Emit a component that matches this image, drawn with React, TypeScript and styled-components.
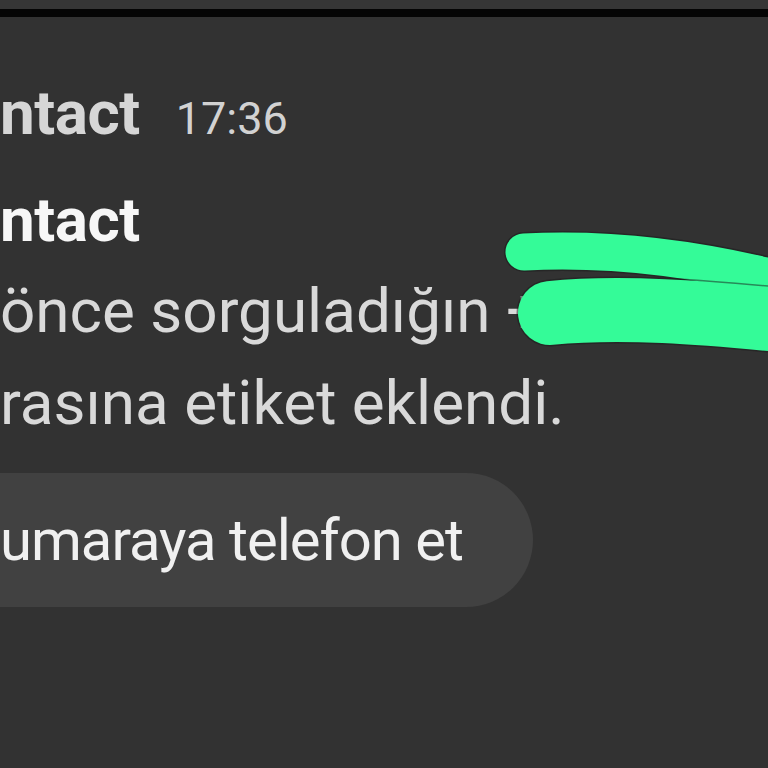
import React from "react";
import styled, { createGlobalStyle } from "styled-components";

const Global = createGlobalStyle`
  html, body { margin: 0; padding: 0; background: #323232; }
  body { width: 768px; height: 768px; overflow: hidden; font-family: Roboto, "Noto Sans", sans-serif; }
  #root { width: 768px; height: 768px; }
`;

const Screen = styled.div`
  position: relative;
  width: 768px;
  height: 768px;
  background: #323232;
  overflow: hidden;
  display: flex;
  flex-direction: column;
`;

const TopStrip = styled.div`
  height: 9px;
  background: #363636;
  flex: none;
`;

const BlackBar = styled.div`
  height: 8px;
  background: #050505;
  flex: none;
`;

const Content = styled.div`
  display: flex;
  flex-direction: column;
  padding-top: 51px;
  white-space: nowrap;
`;

const HeaderRow = styled.div`
  display: flex;
  align-items: baseline;
  gap: 36px;
  height: 90px;
  line-height: 90px;
`;

const Sender = styled.span<{ $bright?: boolean }>`
  font-size: 62px;
  font-weight: 700;
  color: ${(p) => (p.$bright ? "#f7f7f7" : "#d6d6d6")};
  letter-spacing: -0.5px;
`;

const Time = styled.span`
  font-size: 45px;
  font-weight: 400;
  color: #d2d2d2;
`;

const TitleLine = styled.div`
  margin-top: 17px;
  line-height: 90px;
  height: 90px;
`;

const Body = styled.div`
  font-size: 62px;
  line-height: 92px;
  color: #d9d9d9;
`;

const ActionButton = styled.div`
  margin-top: 24px;
  margin-left: -80px;
  align-self: flex-start;
  height: 134px;
  line-height: 134px;
  padding: 0 70px 0 80px;
  border-radius: 67px;
  background: #414141;
  color: #f0f0f0;
  font-size: 58px;
  letter-spacing: -1px;
`;

const Scribble = styled.svg`
  position: absolute;
  left: 0;
  top: 0;
  pointer-events: none;
`;

export default function App() {
  return (
    <>
      <Global />
      <Screen>
        <TopStrip />
        <BlackBar />
        <Content>
          <HeaderRow>
            <Sender>ntact</Sender>
            <Time>17:36</Time>
          </HeaderRow>
          <TitleLine>
            <Sender $bright>ntact</Sender>
          </TitleLine>
          <Body>
            önce sorguladığın +
            <br />
            rasına etiket eklendi.
          </Body>
          <ActionButton>umaraya telefon et</ActionButton>
        </Content>
        <Scribble width="768" height="768" viewBox="0 0 768 768">
          <path
            d="M524 252 C 600 248, 690 256, 790 282"
            stroke="#1a1a1a"
            strokeWidth="40"
            strokeLinecap="round"
            fill="none"
            opacity="0.5"
          />
          <path
            d="M524 252 C 600 248, 690 256, 790 282"
            stroke="#34fb98"
            strokeWidth="37"
            strokeLinecap="round"
            fill="none"
          />
          <path
            d="M550 313 C 620 306, 700 312, 800 322"
            stroke="#1a1a1a"
            strokeWidth="67"
            strokeLinecap="round"
            fill="none"
            opacity="0.5"
          />
          <path
            d="M550 313 C 620 306, 700 312, 800 322"
            stroke="#34fb98"
            strokeWidth="64"
            strokeLinecap="round"
            fill="none"
          />
        </Scribble>
      </Screen>
    </>
  );
}
